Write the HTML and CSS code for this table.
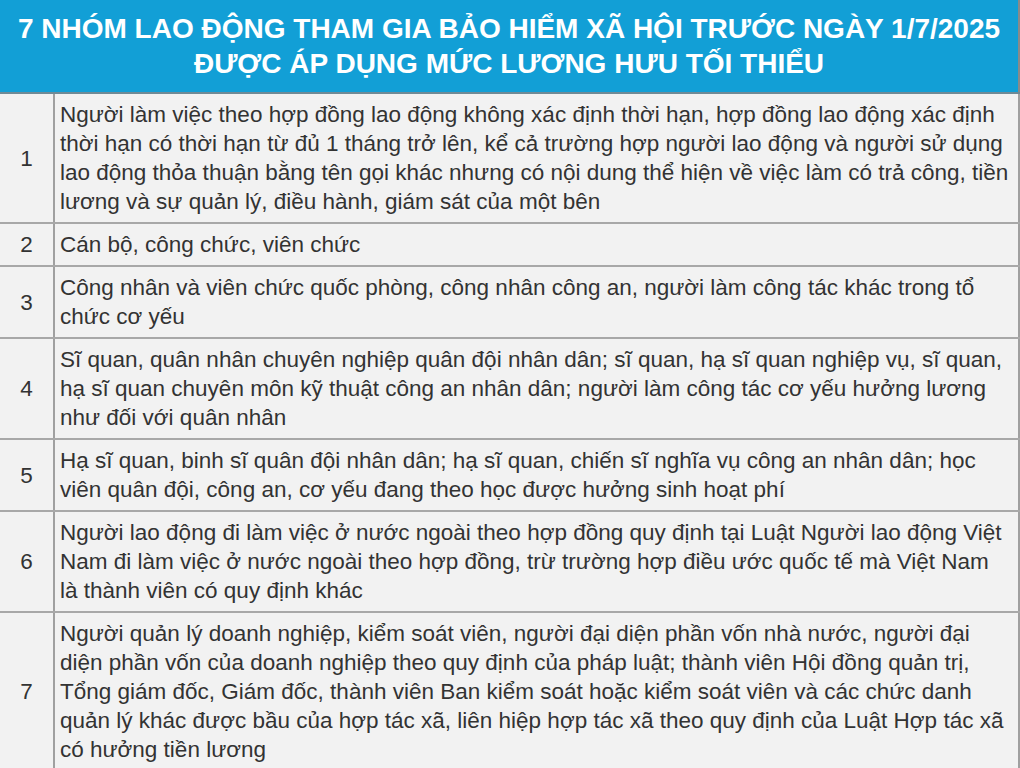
FILE: index.html
```html
<!DOCTYPE html>
<html lang="vi">
<head>
<meta charset="utf-8">
<link rel="stylesheet" href="styles.css">
</head>
<body>
<table class="tbl">
  <colgroup><col class="c-num"><col class="c-txt"></colgroup>
  <thead>
    <tr><th colspan="2" class="head">7 NHÓM LAO ĐỘNG THAM GIA BẢO HIỂM XÃ HỘI TRƯỚC NGÀY 1/7/2025<br>ĐƯỢC ÁP DỤNG MỨC LƯƠNG HƯU TỐI THIỂU</th></tr>
  </thead>
  <tbody>
    <tr><td class="num">1</td><td class="txt">Người làm việc theo hợp đồng lao động không xác định thời hạn, hợp đồng lao động xác định thời hạn có thời hạn từ đủ 1 tháng trở lên, kể cả trường hợp người lao động và người sử dụng lao động thỏa thuận bằng tên gọi khác nhưng có nội dung thể hiện về việc làm có trả công, tiền lương và sự quản lý, điều hành, giám sát của một bên</td></tr>
    <tr><td class="num">2</td><td class="txt">Cán bộ, công chức, viên chức</td></tr>
    <tr><td class="num">3</td><td class="txt">Công nhân và viên chức quốc phòng, công nhân công an, người làm công tác khác trong tổ chức cơ yếu</td></tr>
    <tr><td class="num">4</td><td class="txt">Sĩ quan, quân nhân chuyên nghiệp quân đội nhân dân; sĩ quan, hạ sĩ quan nghiệp vụ, sĩ quan, hạ sĩ quan chuyên môn kỹ thuật công an nhân dân; người làm công tác cơ yếu hưởng lương như đối với quân nhân</td></tr>
    <tr><td class="num">5</td><td class="txt">Hạ sĩ quan, binh sĩ quân đội nhân dân; hạ sĩ quan, chiến sĩ nghĩa vụ công an nhân dân; học viên quân đội, công an, cơ yếu đang theo học được hưởng sinh hoạt phí</td></tr>
    <tr><td class="num">6</td><td class="txt">Người lao động đi làm việc ở nước ngoài theo hợp đồng quy định tại Luật Người lao động Việt Nam đi làm việc ở nước ngoài theo hợp đồng, trừ trường hợp điều ước quốc tế mà Việt Nam là thành viên có quy định khác</td></tr>
    <tr><td class="num">7</td><td class="txt">Người quản lý doanh nghiệp, kiểm soát viên, người đại diện phần vốn nhà nước, người đại diện phần vốn của doanh nghiệp theo quy định của pháp luật; thành viên Hội đồng quản trị, Tổng giám đốc, Giám đốc, thành viên Ban kiểm soát hoặc kiểm soát viên và các chức danh quản lý khác được bầu của hợp tác xã, liên hiệp hợp tác xã theo quy định của Luật Hợp tác xã có hưởng tiền lương</td></tr>
  </tbody>
</table>
</body>
</html>
```

FILE: styles.css
```css
html, body {
  margin: 0;
  padding: 0;
  background: #ffffff;
}
.tbl {
  width: 1020px;
  border-collapse: collapse;
  font-family: "Liberation Sans", Arial, sans-serif;
  color: #333333;
  table-layout: fixed;
}
.c-num {
  width: 54px;
}
.head {
  background: #129fd6;
  color: #ffffff;
  font-weight: bold;
  font-size: 28px;
  line-height: 35px;
  padding: 11px 2px 11px 2px;
  text-align: center;
  border-right: 2px solid #8a8a8a;
  border-bottom: 2px solid #6f8a96;
}
.tbl td {
  background: #f2f2f2;
  font-size: 22.5px;
  line-height: 29px;
  border-bottom: 2px solid #a8a8a8;
  vertical-align: middle;
}
.num {
  text-align: center;
  border-right: 2px solid #a0a0a0;
  padding: 6px 0;
}
.txt {
  padding: 6px 6px 6px 5px;
  border-right: 2px solid #a0a0a0;
}
```
